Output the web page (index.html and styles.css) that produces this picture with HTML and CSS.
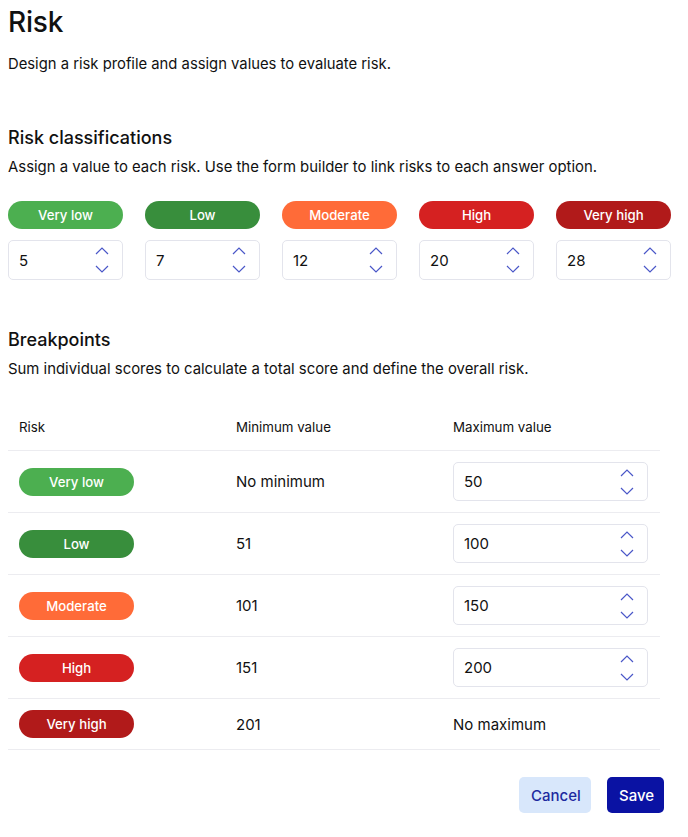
FILE: index.html
```html
<!DOCTYPE html>
<html>
<head>
<meta charset="utf-8">
<link rel="stylesheet" href="styles.css">
</head>
<body>
<div class="page">
  <h1 class="title">Risk</h1>
  <p class="lead">Design a risk profile and assign values to evaluate risk.</p>

  <h2 class="section-title first">Risk classifications</h2>
  <p class="section-desc">Assign a value to each risk. Use the form builder to link risks to each answer option.</p>

  <div class="class-grid">
    <div class="class-col">
      <span class="pill very-low">Very low</span>
      <div class="num-input"><span class="num-val">5</span><span class="spin"><svg viewBox="0 0 14 8"><path d="M1 7 L7 1 L13 7"/></svg><svg viewBox="0 0 14 8"><path d="M1 1 L7 7 L13 1"/></svg></span></div>
    </div>
    <div class="class-col">
      <span class="pill low">Low</span>
      <div class="num-input"><span class="num-val">7</span><span class="spin"><svg viewBox="0 0 14 8"><path d="M1 7 L7 1 L13 7"/></svg><svg viewBox="0 0 14 8"><path d="M1 1 L7 7 L13 1"/></svg></span></div>
    </div>
    <div class="class-col">
      <span class="pill moderate">Moderate</span>
      <div class="num-input"><span class="num-val">12</span><span class="spin"><svg viewBox="0 0 14 8"><path d="M1 7 L7 1 L13 7"/></svg><svg viewBox="0 0 14 8"><path d="M1 1 L7 7 L13 1"/></svg></span></div>
    </div>
    <div class="class-col">
      <span class="pill high">High</span>
      <div class="num-input"><span class="num-val">20</span><span class="spin"><svg viewBox="0 0 14 8"><path d="M1 7 L7 1 L13 7"/></svg><svg viewBox="0 0 14 8"><path d="M1 1 L7 7 L13 1"/></svg></span></div>
    </div>
    <div class="class-col">
      <span class="pill very-high">Very high</span>
      <div class="num-input"><span class="num-val">28</span><span class="spin"><svg viewBox="0 0 14 8"><path d="M1 7 L7 1 L13 7"/></svg><svg viewBox="0 0 14 8"><path d="M1 1 L7 7 L13 1"/></svg></span></div>
    </div>
  </div>

  <h2 class="section-title second">Breakpoints</h2>
  <p class="section-desc">Sum individual scores to calculate a total score and define the overall risk.</p>

  <div class="table">
    <div class="row head">
      <div class="cell">Risk</div>
      <div class="cell">Minimum value</div>
      <div class="cell">Maximum value</div>
    </div>
    <div class="row">
      <div class="cell"><span class="pill very-low">Very low</span></div>
      <div class="cell val">No minimum</div>
      <div class="cell"><div class="num-input wide"><span class="num-val">50</span><span class="spin"><svg viewBox="0 0 14 8"><path d="M1 7 L7 1 L13 7"/></svg><svg viewBox="0 0 14 8"><path d="M1 1 L7 7 L13 1"/></svg></span></div></div>
    </div>
    <div class="row">
      <div class="cell"><span class="pill low">Low</span></div>
      <div class="cell val">51</div>
      <div class="cell"><div class="num-input wide"><span class="num-val">100</span><span class="spin"><svg viewBox="0 0 14 8"><path d="M1 7 L7 1 L13 7"/></svg><svg viewBox="0 0 14 8"><path d="M1 1 L7 7 L13 1"/></svg></span></div></div>
    </div>
    <div class="row">
      <div class="cell"><span class="pill moderate">Moderate</span></div>
      <div class="cell val">101</div>
      <div class="cell"><div class="num-input wide"><span class="num-val">150</span><span class="spin"><svg viewBox="0 0 14 8"><path d="M1 7 L7 1 L13 7"/></svg><svg viewBox="0 0 14 8"><path d="M1 1 L7 7 L13 1"/></svg></span></div></div>
    </div>
    <div class="row">
      <div class="cell"><span class="pill high">High</span></div>
      <div class="cell val">151</div>
      <div class="cell"><div class="num-input wide"><span class="num-val">200</span><span class="spin"><svg viewBox="0 0 14 8"><path d="M1 7 L7 1 L13 7"/></svg><svg viewBox="0 0 14 8"><path d="M1 1 L7 7 L13 1"/></svg></span></div></div>
    </div>
    <div class="row">
      <div class="cell"><span class="pill very-high">Very high</span></div>
      <div class="cell val">201</div>
      <div class="cell val">No maximum</div>
    </div>
  </div>

  <div class="actions">
    <button class="btn cancel">Cancel</button>
    <button class="btn save">Save</button>
  </div>
</div>
</body>
</html>
```

FILE: styles.css
```css
* { box-sizing: border-box; }
html, body { margin: 0; padding: 0; background: #fff; }
body {
  font-family: Inter, "Noto Sans", sans-serif;
  color: #111;
}
.page {
  padding: 0 8px;
  width: 688px;
}
.title {
  margin: 0;
  padding-top: 6px;
  font-size: 28px;
  line-height: 32px;
  font-weight: 500;
  letter-spacing: -0.2px;
}
.lead {
  margin: 16px 0 0;
  font-size: 14.8px;
  line-height: 20px;
}
.section-title {
  margin: 0;
  font-size: 18px;
  line-height: 24px;
  font-weight: 500;
}
.section-title.first { margin-top: 52px; }
.section-title.second { margin-top: 48px; }
.section-desc {
  margin: 7px 0 0;
  font-size: 14.9px;
  line-height: 20px;
}
.class-grid {
  display: flex;
  gap: 22px;
  margin-top: 24px;
}
.class-col {
  width: 115px;
  display: flex;
  flex-direction: column;
  gap: 11px;
}
.pill {
  display: flex;
  align-items: center;
  justify-content: center;
  width: 115px;
  height: 28px;
  border-radius: 14px;
  color: #fff;
  font-size: 13.2px;
  font-weight: 500;
}
.very-low { background: #4caf50; }
.low { background: #388e3c; }
.moderate { background: #ff6b38; }
.high { background: #d52121; }
.very-high { background: #b11a1a; }
.num-input {
  display: flex;
  align-items: center;
  height: 40px;
  border: 1px solid #e3e4ec;
  border-radius: 5px;
  padding-left: 10px;
  font-size: 15px;
}
.num-input.wide { width: 195px; height: 39px; }
.spin {
  margin-left: auto;
  margin-right: 13px;
  display: flex;
  flex-direction: column;
  gap: 10px;
}
.spin svg {
  width: 14px;
  height: 8px;
  display: block;
  fill: none;
  stroke: #4a57c8;
  stroke-width: 1.2;
}
.table {
  margin-top: 26px;
  width: 652px;
}
.row {
  display: grid;
  grid-template-columns: 217px 217px 218px;
  align-items: center;
  border-bottom: 1px solid #ececf0;
  padding: 11px 0;
}
.row.head {
  font-size: 13.3px;
  padding: 14px 0 15px;
}
.cell {
  padding-left: 11px;
}
.cell.val { font-size: 15px; }
.actions {
  display: flex;
  justify-content: flex-end;
  gap: 16px;
  width: 656px;
  margin-top: 27px;
}
.btn {
  height: 36px;
  border: none;
  border-radius: 5px;
  font-family: inherit;
  font-size: 15px;
  font-weight: 500;
  padding: 0 12px;
}
.cancel { background: #d8e7fb; color: #1d2aa0; width: 72px; }
.save { background: #0a12a3; color: #fff; width: 57px; }
```
